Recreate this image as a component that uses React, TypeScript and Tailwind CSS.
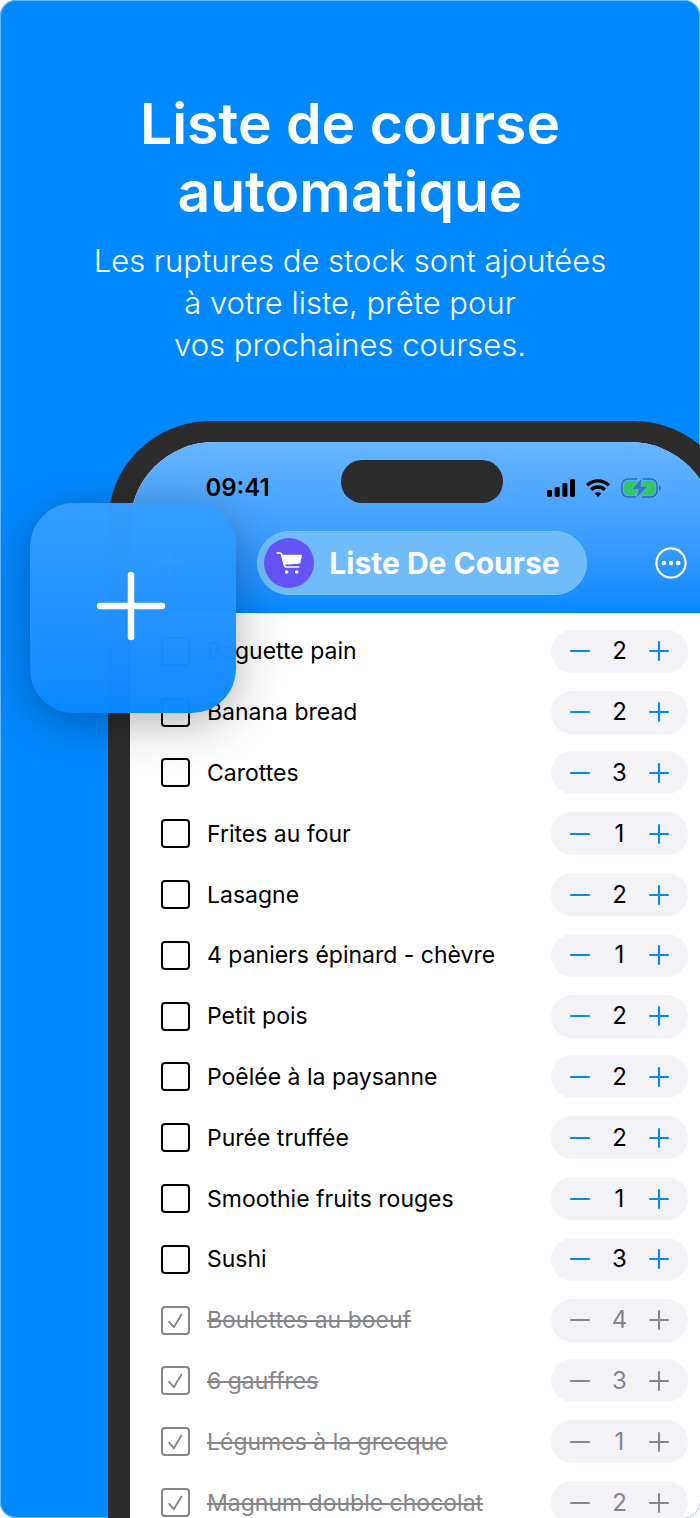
import { useState } from "react";

interface Article {
  id: number;
  nom: string;
  quantite: number;
  achete: boolean;
}

const ARTICLES: Article[] = [
  { id: 1, nom: "Baguette pain", quantite: 2, achete: false },
  { id: 2, nom: "Banana bread", quantite: 2, achete: false },
  { id: 3, nom: "Carottes", quantite: 3, achete: false },
  { id: 4, nom: "Frites au four", quantite: 1, achete: false },
  { id: 5, nom: "Lasagne", quantite: 2, achete: false },
  { id: 6, nom: "4 paniers épinard - chèvre", quantite: 1, achete: false },
  { id: 7, nom: "Petit pois", quantite: 2, achete: false },
  { id: 8, nom: "Poêlée à la paysanne", quantite: 2, achete: false },
  { id: 9, nom: "Purée truffée", quantite: 2, achete: false },
  { id: 10, nom: "Smoothie fruits rouges", quantite: 1, achete: false },
  { id: 11, nom: "Sushi", quantite: 3, achete: false },
  { id: 12, nom: "Boulettes au boeuf", quantite: 4, achete: true },
  { id: 13, nom: "6 gauffres", quantite: 3, achete: true },
  { id: 14, nom: "Légumes à la grecque", quantite: 1, achete: true },
  { id: 15, nom: "Magnum double chocolat", quantite: 2, achete: true },
];

export default function App() {
  const [articles, setArticles] = useState<Article[]>(ARTICLES);

  const basculer = (id: number) => {
    setArticles(articles.map((a) => (a.id === id ? { ...a, achete: !a.achete } : a)));
  };

  const changerQuantite = (id: number, delta: number) => {
    setArticles(
      articles.map((a) => (a.id === id ? { ...a, quantite: Math.max(0, a.quantite + delta) } : a))
    );
  };

  return (
    <main className="flex min-h-screen flex-col overflow-hidden rounded-[16px] bg-[#0088ff] font-['Inter',sans-serif] shadow-[inset_0_0_0_1px_#66b8ff]">
      <header className="px-6 pt-[90px] text-center text-white">
        <h1 className="text-[57px] leading-[68px] font-semibold">
          Liste de course
          <br />
          automatique
        </h1>
        <p className="mt-[14px] text-[31px] leading-[42px] font-light">
          Les ruptures de stock sont ajoutées
          <br />
          à votre liste, prête pour
          <br />
          vos prochaines courses.
        </p>
      </header>

      {/* Phone */}
      <div className="relative mt-[55px] -mr-[36px] ml-[108px] flex grow flex-col rounded-t-[102px] bg-[#2c2c2c] px-[22px] pt-[21px]">
        <div className="flex grow flex-col overflow-hidden rounded-t-[84px] bg-white">
          <div className="bg-linear-to-b from-[#66b5ff] to-[#0088ff] pt-[18px] pb-[18px]">
            <StatusBar />
            <NavBar />
          </div>

          <ul className="-mb-[15px] grid grow auto-rows-fr pt-2">
            {articles.map((article) => (
              <ArticleRow
                key={article.id}
                article={article}
                onToggle={() => basculer(article.id)}
                onChange={(delta) => changerQuantite(article.id, delta)}
              />
            ))}
          </ul>
        </div>

        {/* Floating add tile */}
        <button
          type="button"
          aria-label="Ajouter un article"
          className="absolute top-[82px] -left-[78px] flex h-[210px] w-[206px] items-center justify-center rounded-[44px] bg-linear-to-b from-[#349dff]/98 to-[#0888ff]/98 pr-1 pb-1 shadow-[0_10px_48px_rgba(0,0,0,0.3)]"
        >
          <svg className="h-[70px] w-[70px]" viewBox="0 0 70 70" fill="none" stroke="#fafcff" strokeWidth={6.5} strokeLinecap="round">
            <path d="M35 4v62M4 35h62" />
          </svg>
        </button>
      </div>
    </main>
  );
}

function StatusBar() {
  return (
    <div className="grid grid-cols-[1fr_162px_1fr] items-center text-black">
      <span className="pt-3 pl-1 text-center text-[24px] leading-[30px] font-semibold">09:41</span>
      <div className="h-[43px] rounded-[21px] bg-[#2c2c2c]" />
      <div className="flex items-center justify-center gap-[11px] pt-3 pr-[10px]">
        <svg className="h-[18px] w-[28px]" viewBox="0 0 28 18" fill="currentColor">
          <rect x="0" y="11" width="5" height="7" rx="1.4" />
          <rect x="7.7" y="8" width="5" height="10" rx="1.4" />
          <rect x="15.4" y="4" width="5" height="14" rx="1.4" />
          <rect x="23" y="0" width="5" height="18" rx="1.4" />
        </svg>
        <svg className="h-[18px] w-[24px]" viewBox="0 0 24 18" fill="none" stroke="currentColor" strokeWidth={3.4}>
          <path d="M1.1 6.3a15.6 15.6 0 0 1 21.8 0" />
          <path d="M5.1 10.8a10 10 0 0 1 13.8 0" />
          <path d="M12 18 8.7 14.6a4.800 4.800 0 0 1 6.600 0Z" fill="currentColor" stroke="none" />
        </svg>
        <svg className="h-[20px] w-[40px]" viewBox="0 0 40 20" fill="none">
          <path d="M16 1H7a6 6 0 0 0-6 6v6a6 6 0 0 0 6 6h8M22 1h8a6 6 0 0 1 6 6v6a6 6 0 0 1-6 6h-9" stroke="#2f6da6" strokeWidth={1.4} />
          <path d="M38 7.200c1.100.4 1.800 1.500 1.800 2.800s-.7 2.400-1.800 2.800Z" fill="#2f6da6" />
          <path d="M17 3.200H7.200a4 4 0 0 0-4 4v5.600a4 4 0 0 0 4 4h7.600l1.600-5.300h-4.700c-.8 0-1-.7-.5-1.300ZM21.200 3.200h8.600a4 4 0 0 1 4 4v5.600a4 4 0 0 1-4 4H19.600l6.600-7.200c.5-.6.200-1.300-.6-1.300h-5.500Z" fill="#34c759" />
          <path d="M20.600.8 12 10.300c-.3.300-.1.700.3.700h5.400L15.800 19.200 25.500 9.400c.3-.3.100-.7-.3-.7h-5.700Z" fill="#2f7ab8" />
        </svg>
      </div>
    </div>
  );
}

function NavBar() {
  return (
    <div className="mt-[28px] grid grid-cols-[1fr_auto_1fr] items-center px-[27px] text-white">
      <button type="button" aria-label="Ajouter" className="justify-self-start">
        <svg className="h-[26px] w-[26px]" viewBox="0 0 26 26" fill="none" stroke="currentColor" strokeWidth={2} strokeLinecap="round">
          <path d="M13 1v24M1 13h24" />
        </svg>
      </button>
      <div className="flex h-[64px] items-center gap-[15px] rounded-full border border-[#6ccdfc] bg-[#70bbfa] pr-[26px] pl-[6px]">
        <span className="flex h-[50px] w-[50px] items-center justify-center rounded-full bg-[#6554f5]">
          <svg className="h-[24px] w-[26px]" viewBox="0 0 78 72" fill="none">
            <path d="M3 6h10c2 0 3 1 3.600 3L25 43c.6 4 2 5 6 5h37" stroke="#fff" strokeWidth={5} strokeLinecap="round" strokeLinejoin="round" />
            <path d="M16 11h58c3 0 4 2 3.500 4l-4 19c-.6 3-2 4-5 4.300L24 41Z" fill="#fff" />
            <circle cx="32" cy="63" r="5.500" fill="#fff" />
            <circle cx="62" cy="63" r="5.500" fill="#fff" />
          </svg>
        </span>
        <h2 className="text-[30px] leading-[36px] font-bold">Liste De Course</h2>
      </div>
      <button type="button" aria-label="Plus d'options" className="justify-self-end">
        <svg className="h-[32px] w-[32px]" viewBox="0 0 32 32" fill="none">
          <circle cx="16" cy="16" r="14.600" stroke="currentColor" strokeWidth={2.2} />
          <circle cx="8.800" cy="16" r="2.300" fill="currentColor" />
          <circle cx="16" cy="16" r="2.300" fill="currentColor" />
          <circle cx="23.200" cy="16" r="2.300" fill="currentColor" />
        </svg>
      </button>
    </div>
  );
}

interface RowProps {
  article: Article;
  onToggle: () => void;
  onChange: (delta: number) => void;
}

function ArticleRow({ article, onToggle, onChange }: RowProps) {
  const { nom, quantite, achete } = article;

  return (
    <li className="flex items-center justify-between pr-[26px] pl-[31px]">
      <label className="flex items-center gap-[17px]">
        <span className="grid">
          <input
            type="checkbox"
            checked={achete}
            onChange={onToggle}
            className="col-start-1 row-start-1 h-[29px] w-[29px] appearance-none rounded-[4px] border-2 border-black checked:border-[#85858a]"
          />
          {achete && (
            <svg className="pointer-events-none col-start-1 row-start-1 h-[29px] w-[29px]" viewBox="0 0 29 29" fill="none" stroke="#85858a" strokeWidth={1.8} strokeLinecap="round" strokeLinejoin="round">
              <path d="m8.200 15.800 4.600 5.400L20.500 8.500" />
            </svg>
          )}
        </span>
        <span
          className={
            achete
              ? "text-[23px] leading-[30px] text-[#85858a] line-through decoration-2"
              : "text-[23px] leading-[30px] text-black"
          }
        >
          {nom}
        </span>
      </label>

      <div
        className={
          achete
            ? "grid h-[43px] w-[137px] grid-cols-3 items-center justify-items-center rounded-full bg-[#f2f2f7] px-[9px] text-[#85858a]"
            : "grid h-[43px] w-[137px] grid-cols-3 items-center justify-items-center rounded-full bg-[#f2f2f7] px-[9px] text-[#0088ff]"
        }
      >
        <button type="button" aria-label={`Retirer ${nom}`} onClick={() => onChange(-1)}>
          <svg className="h-[20px] w-[20px]" viewBox="0 0 20 20" fill="none" stroke="currentColor" strokeWidth={2} strokeLinecap="round">
            <path d="M1 10h18" />
          </svg>
        </button>
        <span className={achete ? "text-[24px] leading-[30px]" : "text-[24px] leading-[30px] text-black"}>
          {quantite}
        </span>
        <button type="button" aria-label={`Ajouter ${nom}`} onClick={() => onChange(1)}>
          <svg className="h-[20px] w-[20px]" viewBox="0 0 20 20" fill="none" stroke="currentColor" strokeWidth={2} strokeLinecap="round">
            <path d="M10 1v18M1 10h18" />
          </svg>
        </button>
      </div>
    </li>
  );
}
